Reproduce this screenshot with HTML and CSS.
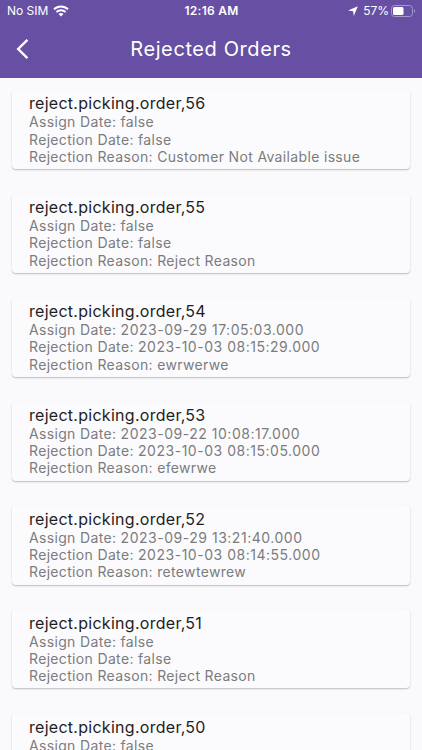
FILE: index.html
```html
<!DOCTYPE html>
<html lang="en">

<head>
  <meta charset="UTF-8">
  <meta name="viewport" content="width=device-width, initial-scale=1.0">
  <title>Rejected Orders</title>
  <link rel="stylesheet" href="styles.css">
</head>

<body>
  <header class="header">
    <div class="status-bar">
      <div class="status-left">
        <span class="carrier">No SIM</span>
        <svg class="wifi" width="16" height="12" viewBox="0 0 16 12" fill="none" stroke="#fff" stroke-width="2">
          <path d="M1 4.3a10 10 0 0 1 14 0" />
          <path d="M3.4 7a6.6 6.6 0 0 1 9.2 0" />
          <path d="M8 11.6L5.5 9.1a3.6 3.6 0 0 1 5 0z" fill="#fff" stroke="none" />
        </svg>
      </div>
      <span class="clock">12:16 AM</span>
      <div class="status-right">
        <svg class="location" width="10" height="10" viewBox="0 0 10 10" fill="#fff">
          <path d="M9.8 0.2L5.8 9.9L5.1 5.2L0.1 4.6z" />
        </svg>
        <span class="percent">57%</span>
        <svg class="battery" width="25" height="12" viewBox="0 0 25 12">
          <rect x="0.5" y="0.5" width="21" height="11" rx="3" fill="none" stroke="#a597ca" />
          <rect x="2" y="2" width="10.5" height="8" rx="1.5" fill="#fff" />
          <path d="M23 4.2c1.6.6 1.6 3 0 3.6z" fill="#a597ca" />
        </svg>
      </div>
    </div>
    <div class="nav-bar">
      <svg class="back" width="13" height="20" viewBox="0 0 13 20" fill="none" stroke="#fff" stroke-width="2.4">
        <path d="M11.4 0.9L2.2 10L11.4 19.1" />
      </svg>
      <h1>Rejected Orders</h1>
    </div>
  </header>

  <main class="orders">
    <div class="card">
      <h2>reject.picking.order,56</h2>
      <p>Assign Date: false</p>
      <p>Rejection Date: false</p>
      <p>Rejection Reason: Customer Not Available issue</p>
    </div>
    <div class="card">
      <h2>reject.picking.order,55</h2>
      <p>Assign Date: false</p>
      <p>Rejection Date: false</p>
      <p>Rejection Reason: Reject Reason</p>
    </div>
    <div class="card">
      <h2>reject.picking.order,54</h2>
      <p>Assign Date: <span class="date">2023-09-29 17:05:03.000</span></p>
      <p>Rejection Date: <span class="date">2023-10-03 08:15:29.000</span></p>
      <p>Rejection Reason: ewrwerwe</p>
    </div>
    <div class="card">
      <h2>reject.picking.order,53</h2>
      <p>Assign Date: <span class="date">2023-09-22 10:08:17.000</span></p>
      <p>Rejection Date: <span class="date">2023-10-03 08:15:05.000</span></p>
      <p>Rejection Reason: efewrwe</p>
    </div>
    <div class="card">
      <h2>reject.picking.order,52</h2>
      <p>Assign Date: <span class="date">2023-09-29 13:21:40.000</span></p>
      <p>Rejection Date: <span class="date">2023-10-03 08:14:55.000</span></p>
      <p>Rejection Reason: retewtewrew</p>
    </div>
    <div class="card">
      <h2>reject.picking.order,51</h2>
      <p>Assign Date: false</p>
      <p>Rejection Date: false</p>
      <p>Rejection Reason: Reject Reason</p>
    </div>
    <div class="card">
      <h2>reject.picking.order,50</h2>
      <p>Assign Date: false</p>
    </div>
  </main>
</body>

</html>
```
FILE: styles.css
```css
* {
  box-sizing: border-box;
}

body {
  display: flex;
  flex-direction: column;
  margin: 0;
  height: 100vh;
  overflow: hidden;
  font-family: Inter, "Liberation Sans", sans-serif;
  background-color: #fafafc;
}

h1,
h2,
p {
  margin: 0;
  font-weight: 400;
  white-space: nowrap;
}

/* header */
.header {
  flex: none;
  height: 77.5px;
  color: #fff;
  background-color: #6750a3;
}

.status-bar {
  display: grid;
  grid-template-columns: 1fr auto 1fr;
  align-items: center;
  height: 22px;
  padding: 0 6px 0 7px;
  font-size: 12px;
  line-height: 22px;
}

.status-left,
.status-right {
  display: flex;
  align-items: center;
}

.status-left {
  gap: 5px;
}

.status-right {
  justify-content: flex-end;
}

.clock {
  font-weight: 600;
  letter-spacing: 0.25px;
}

.location {
  margin-right: 5px;
}

.percent {
  margin-right: 2px;
}

.nav-bar {
  display: grid;
  grid-template-columns: 40px 1fr 40px;
  align-items: center;
  height: 54px;
}

.back {
  margin-left: 16px;
}

.nav-bar h1 {
  font-size: 20px;
  letter-spacing: 0.6px;
  text-align: center;
}

/* order list */
.orders {
  flex: 1;
  min-height: 0;
  overflow: hidden;
  padding: 12.4px 12.3px 0;
}

.card {
  height: 79.2px;
  margin-bottom: 24.7px;
  padding: 3.5px 16.7px 0;
  border-radius: 4px;
  background-color: #fbfbfd;
  box-shadow: 0 1px 2px rgba(0, 0, 0, 0.2), 0 1px 1px rgba(0, 0, 0, 0.06);
}

.card h2 {
  font-size: 16px;
  line-height: 20px;
  letter-spacing: 0.28px;
  color: #1f1e22;
}

.card p {
  font-size: 14px;
  line-height: 17.2px;
  letter-spacing: 0.34px;
  color: #7c7c7e;
}

.card .date {
  letter-spacing: 0.52px;
}
```
